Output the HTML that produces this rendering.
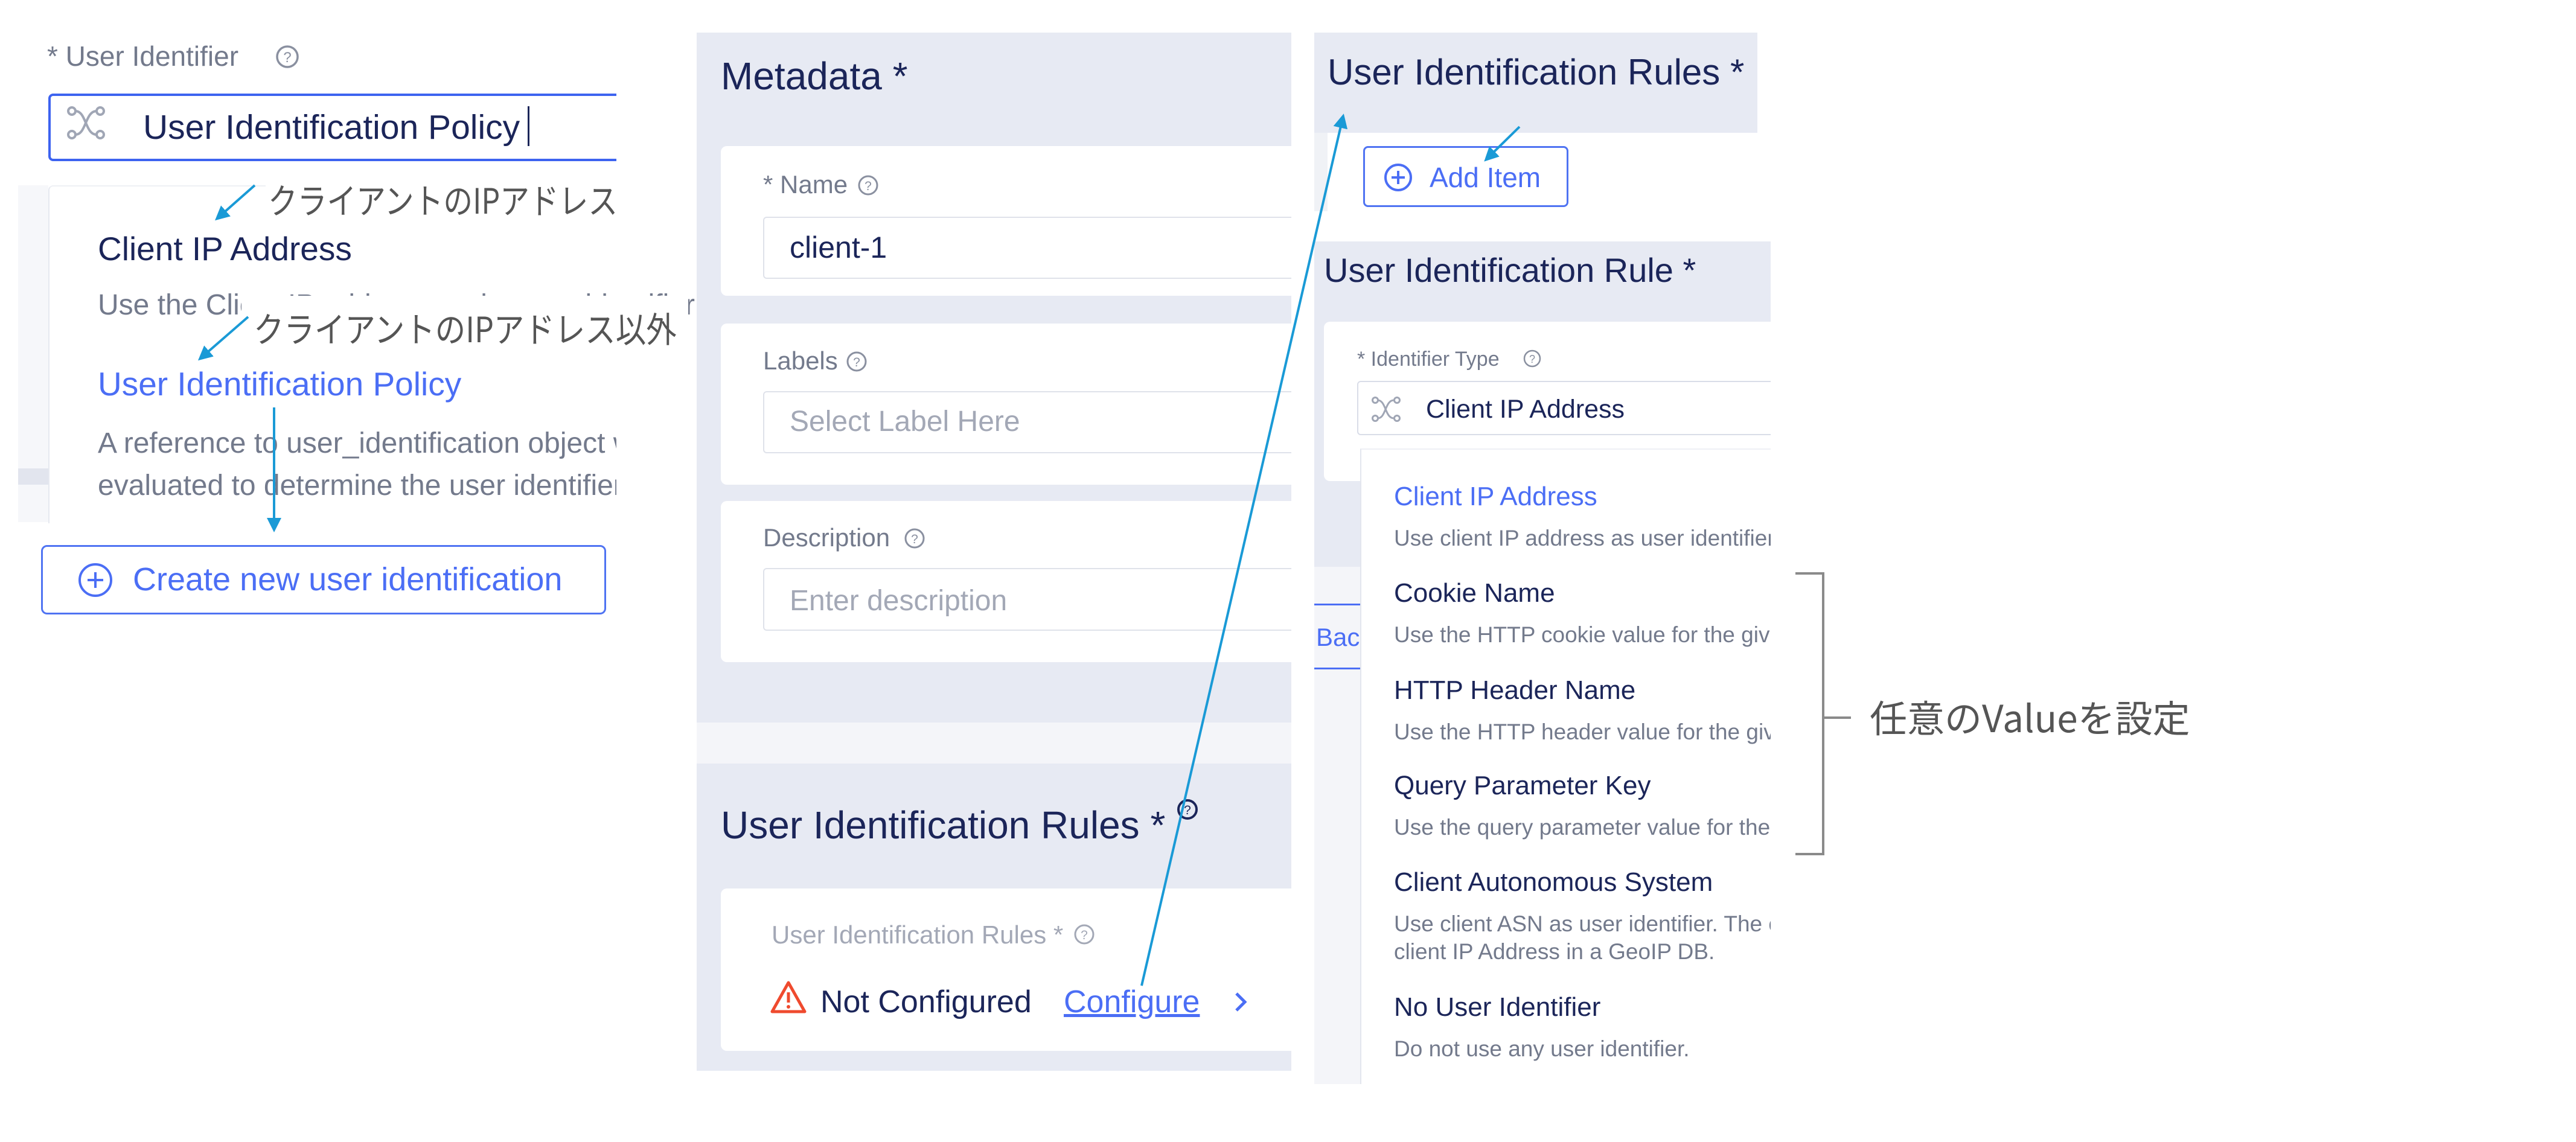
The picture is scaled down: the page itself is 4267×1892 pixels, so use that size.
<!DOCTYPE html>
<html><head><meta charset="utf-8"><style>
*{margin:0;padding:0;box-sizing:border-box}
body{width:4267px;height:1892px;background:#fff;position:relative;overflow:hidden;font-family:"Liberation Sans","Noto Sans CJK JP",sans-serif;color:#1b2559}
.a{position:absolute;white-space:nowrap;line-height:1}
.bg{position:absolute}
.jp{font-family:"Noto Sans CJK JP","Liberation Sans",sans-serif;color:#555;line-height:1;transform:scaleX(0.84);transform-origin:0 0}
.t{color:#1b2559}.g{color:#737a8c}.b{color:#4b6ef5}.ph{color:#a3a8b6}
</style></head><body>

<!-- LEFT -->
<div class="bg" style="left:30px;top:307px;width:50px;height:558px;background:#f6f7fa"></div>
<div class="bg" style="left:30px;top:776px;width:50px;height:27px;background:#e2e5ee"></div>
<div class="a g" style="left:78px;top:70px;font-size:46px">* User Identifier</div>
<svg class="bg" style="left:452px;top:70px" width="48" height="48"><circle cx="24" cy="24" r="17" fill="none" stroke="#8a90a0" stroke-width="3.5"/><text x="24" y="33" font-size="24" text-anchor="middle" fill="#8a90a0" font-family="Liberation Sans">?</text></svg>
<div class="bg" style="left:0;top:150px;width:1021px;height:125px;overflow:hidden">
 <div class="bg" style="left:80px;top:5px;width:1000px;height:112px;border:4px solid #3d63f0;border-radius:8px;background:#fff"></div>
</div>
<svg class="bg" style="left:111px;top:176px" width="64" height="56" fill="none" stroke="#a0a6b5" stroke-width="4"><circle cx="8" cy="8" r="6"/><circle cx="8" cy="47" r="6"/><circle cx="55" cy="8" r="6"/><circle cx="55" cy="47" r="6"/><path d="M14 8 C32 8 30 47 49 47 M14 47 C32 47 30 8 49 8"/></svg>
<div class="a t" style="left:237px;top:183px;font-size:57px">User Identification Policy</div>
<div class="bg" style="left:874px;top:176px;width:3px;height:66px;background:#1b2559"></div>
<div class="bg" style="left:80px;top:307px;width:941px;height:560px;background:#fff;border-left:2px solid #e6e9f0;border-top:2px solid #eef0f5;border-radius:8px 0 0 0"></div>
<div class="a t" style="left:162px;top:385px;font-size:55px">Client IP Address</div>
<div class="a g" style="left:162px;top:482px;font-size:48px">Use the Client IP address as the user identifier</div>
<div class="bg" style="left:400px;top:490px;width:740px;height:98px;background:#fff"></div>
<div class="bg" style="left:440px;top:290px;width:590px;height:78px;background:#fff"></div>
<div class="a jp" style="left:444px;top:300px;font-size:58px">クライアントのIPアドレス</div>
<div class="a jp" style="left:420px;top:513px;font-size:58px;transform:scaleX(0.87)">クライアントのIPアドレス以外</div>
<div class="a b" style="left:162px;top:609px;font-size:55px">User Identification Policy</div>
<div class="bg" style="left:0;top:700px;width:1021px;height:140px;overflow:hidden">
 <div class="a g" style="left:162px;top:11px;font-size:48px">A reference to user_identification object which is</div>
 <div class="a g" style="left:162px;top:81px;font-size:48px">evaluated to determine the user identifier</div>
</div>
<div class="bg" style="left:68px;top:903px;width:936px;height:115px;border:3px solid #4f73f2;border-radius:10px"></div>
<svg class="bg" style="left:128px;top:931px" width="60" height="60" fill="none" stroke="#4b6ef5" stroke-width="4"><circle cx="30" cy="30" r="26"/><path d="M30 17V43M17 30H43"/></svg>
<div class="a b" style="left:220px;top:933px;font-size:54px">Create new user identification</div>

<!-- MIDDLE -->
<div class="bg" style="left:1154px;top:54px;width:985px;height:1143px;background:#e7eaf3"></div>
<div class="bg" style="left:1154px;top:1197px;width:985px;height:68px;background:#f4f5f9"></div>
<div class="bg" style="left:1154px;top:1265px;width:985px;height:509px;background:#e7eaf3"></div>
<div class="a t" style="left:1194px;top:94px;font-size:64px">Metadata *</div>
<div class="bg" style="left:1194px;top:242px;width:945px;height:248px;background:#fff;border-radius:10px 0 0 10px"></div>
<div class="a g" style="left:1264px;top:285px;font-size:42px">* Name</div>
<div class="bg" style="left:1264px;top:359px;width:875px;height:103px;border:2px solid #dfe2ea;border-right:none;border-radius:6px 0 0 6px"></div>
<div class="a t" style="left:1308px;top:385px;font-size:50px">client-1</div>
<div class="bg" style="left:1194px;top:536px;width:945px;height:267px;background:#fff;border-radius:10px 0 0 10px"></div>
<div class="a g" style="left:1264px;top:577px;font-size:42px">Labels</div>
<div class="bg" style="left:1264px;top:648px;width:875px;height:103px;border:2px solid #dfe2ea;border-right:none;border-radius:6px 0 0 6px"></div>
<div class="a ph" style="left:1308px;top:675px;font-size:48px">Select Label Here</div>
<div class="bg" style="left:1194px;top:830px;width:945px;height:267px;background:#fff;border-radius:10px 0 0 10px"></div>
<div class="a g" style="left:1264px;top:870px;font-size:42px">Description</div>
<div class="bg" style="left:1264px;top:941px;width:875px;height:104px;border:2px solid #dfe2ea;border-right:none;border-radius:6px 0 0 6px"></div>
<div class="a ph" style="left:1308px;top:972px;font-size:48px">Enter description</div>
<svg class="bg" style="left:1418px;top:287px" width="40" height="40"><circle cx="20" cy="20" r="15" fill="none" stroke="#8a90a0" stroke-width="3"/><text x="20" y="28" font-size="21" text-anchor="middle" fill="#8a90a0">?</text></svg>
<svg class="bg" style="left:1399px;top:579px" width="40" height="40"><circle cx="20" cy="20" r="15" fill="none" stroke="#8a90a0" stroke-width="3"/><text x="20" y="28" font-size="21" text-anchor="middle" fill="#8a90a0">?</text></svg>
<svg class="bg" style="left:1495px;top:872px" width="40" height="40"><circle cx="20" cy="20" r="15" fill="none" stroke="#8a90a0" stroke-width="3"/><text x="20" y="28" font-size="21" text-anchor="middle" fill="#8a90a0">?</text></svg>
<div class="a t" style="left:1194px;top:1335px;font-size:64px">User Identification Rules *</div>
<svg class="bg" style="left:1947px;top:1321px" width="40" height="40"><circle cx="20" cy="20" r="15" fill="none" stroke="#1b2559" stroke-width="4"/><text x="20" y="28" font-size="21" text-anchor="middle" fill="#1b2559">?</text></svg>
<div class="bg" style="left:1194px;top:1472px;width:945px;height:269px;background:#fff;border-radius:10px 0 0 10px"></div>
<div class="a ph" style="left:1278px;top:1528px;font-size:42px">User Identification Rules *</div>
<svg class="bg" style="left:1776px;top:1528px" width="40" height="40"><circle cx="20" cy="20" r="15" fill="none" stroke="#a3a8b6" stroke-width="3"/><text x="20" y="28" font-size="21" text-anchor="middle" fill="#a3a8b6">?</text></svg>
<svg class="bg" style="left:1275px;top:1624px" width="62" height="56"><path d="M31 4 L58 52 H4 Z" fill="none" stroke="#ef4a2e" stroke-width="5" stroke-linejoin="round"/><path d="M31 20V37" stroke="#ef4a2e" stroke-width="5"/><circle cx="31" cy="44" r="3" fill="#ef4a2e"/></svg>
<div class="a t" style="left:1359px;top:1634px;font-size:52px">Not Configured</div>
<div class="a b" style="left:1762px;top:1634px;font-size:52px;text-decoration:underline">Configure</div>
<svg class="bg" style="left:2040px;top:1640px" width="30" height="40" fill="none" stroke="#4b6ef5" stroke-width="5"><path d="M8 6 L22 20 L8 34"/></svg>

<!-- RIGHT -->
<div class="bg" style="left:2177px;top:54px;width:734px;height:166px;background:#e7eaf3"></div>
<div class="bg" style="left:2177px;top:220px;width:22px;height:130px;background:#f0f2f6"></div>
<div class="a t" style="left:2199px;top:90px;font-size:60px">User Identification Rules *</div>
<div class="bg" style="left:2258px;top:242px;width:340px;height:101px;border:3px solid #4f73f2;border-radius:8px"></div>
<svg class="bg" style="left:2291px;top:269px" width="50" height="50" fill="none" stroke="#4b6ef5" stroke-width="4"><circle cx="25" cy="25" r="21"/><path d="M25 14V36M14 25H36"/></svg>
<div class="a b" style="left:2368px;top:271px;font-size:46px">Add Item</div>
<div class="bg" style="left:2177px;top:400px;width:756px;height:539px;background:#e7eaf3"></div>
<div class="bg" style="left:2177px;top:939px;width:76px;height:953px;background:#f4f5f9"></div>
<div class="a t" style="left:2193px;top:420px;font-size:56px">User Identification Rule *</div>
<div class="bg" style="left:2193px;top:533px;width:740px;height:264px;background:#fff;border-radius:10px 0 0 10px"></div>
<div class="a g" style="left:2248px;top:578px;font-size:34px">* Identifier Type</div>
<svg class="bg" style="left:2521px;top:577px" width="34" height="34"><circle cx="17" cy="17" r="13" fill="none" stroke="#8a90a0" stroke-width="2.5"/><text x="17" y="24" font-size="18" text-anchor="middle" fill="#8a90a0">?</text></svg>
<div class="bg" style="left:2248px;top:631px;width:685px;height:90px;border:2px solid #d9dde8;border-right:none;border-radius:6px 0 0 6px;background:#fff"></div>
<svg class="bg" style="left:2272px;top:657px" width="48" height="42" fill="none" stroke="#a0a6b5" stroke-width="3"><circle cx="6" cy="6" r="4.5"/><circle cx="6" cy="36" r="4.5"/><circle cx="42" cy="6" r="4.5"/><circle cx="42" cy="36" r="4.5"/><path d="M10 6 C24 6 22 36 37 36 M10 36 C24 36 22 6 37 6"/></svg>
<div class="a t" style="left:2362px;top:657px;font-size:43px">Client IP Address</div>
<div class="bg" style="left:2177px;top:1000px;width:76px;height:3px;background:#4b6ef5"></div>
<div class="bg" style="left:2177px;top:1106px;width:76px;height:3px;background:#4b6ef5"></div>
<div class="a b" style="left:2180px;top:1035px;font-size:42px">Bac</div>
<div class="bg" style="left:2253px;top:743px;width:680px;height:1149px;background:#fff;border-left:2px solid #e3e6ee;border-top:2px solid #eef0f5;overflow:hidden">
 <div class="a b" style="left:54px;top:56px;font-size:44px">Client IP Address</div>
 <div class="a g" style="left:54px;top:128px;font-size:37px">Use client IP address as user identifier.</div>
 <div class="a t" style="left:54px;top:216px;font-size:44px">Cookie Name</div>
 <div class="a g" style="left:54px;top:288px;font-size:37px">Use the HTTP cookie value for the given name</div>
 <div class="a t" style="left:54px;top:377px;font-size:44px">HTTP Header Name</div>
 <div class="a g" style="left:54px;top:449px;font-size:37px">Use the HTTP header value for the given name</div>
 <div class="a t" style="left:54px;top:535px;font-size:44px">Query Parameter Key</div>
 <div class="a g" style="left:54px;top:607px;font-size:37px">Use the query parameter value for the given key</div>
 <div class="a t" style="left:54px;top:695px;font-size:44px">Client Autonomous System</div>
 <div class="a g" style="left:54px;top:767px;font-size:37px">Use client ASN as user identifier. The client ASN is</div>
 <div class="a g" style="left:54px;top:813px;font-size:37px">client IP Address in a GeoIP DB.</div>
 <div class="a t" style="left:54px;top:902px;font-size:44px">No User Identifier</div>
 <div class="a g" style="left:54px;top:974px;font-size:37px">Do not use any user identifier.</div>
</div>
<div class="bg" style="left:2177px;top:1796px;width:780px;height:96px;background:#fff"></div>
<div class="a jp" style="left:3097px;top:1155px;font-size:62px;transform:none">任意のValueを設定</div>

<!-- OVERLAY -->
<svg class="bg" style="left:0;top:0" width="4267" height="1892">
 <defs><marker id="m" markerWidth="6" markerHeight="6" refX="4" refY="3" orient="auto" markerUnits="strokeWidth"><path d="M0 0 L6 3 L0 6 Z" fill="#1a9ad6"/></marker></defs>
 <g stroke="#1a9ad6" stroke-width="4" fill="none">
  <path d="M422 307 L362 360" marker-end="url(#m)"/>
  <path d="M411 525 L334 592" marker-end="url(#m)"/>
  <path d="M454 675 L454 874" marker-end="url(#m)"/>
  <path d="M1891 1633 L2224 196" marker-end="url(#m)"/>
  <path d="M2517 210 L2464 262" marker-end="url(#m)"/>
 </g>
 <path d="M2974 950 H3020 V1415 H2974 M3020 1189 H3066" stroke="#8a8a8a" stroke-width="4" fill="none"/>
</svg>
</body></html>
